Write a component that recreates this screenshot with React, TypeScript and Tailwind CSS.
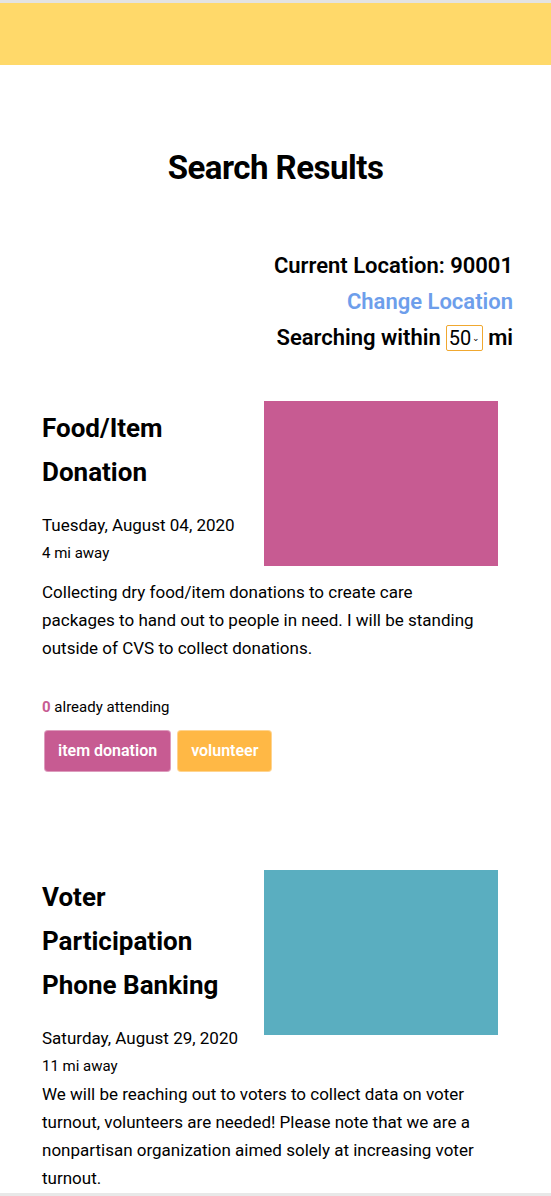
import React from "react";

const events = [
  {
    title: "Food/Item Donation",
    date: "Tuesday, August 04, 2020",
    distance: "4 mi away",
    description:
      "Collecting dry food/item donations to create care packages to hand out to people in need. I will be standing outside of CVS to collect donations.",
    color: "bg-[#c75b92]",
    attending: 0,
    tags: [
      { name: "item donation", color: "bg-[#c75b92]" },
      { name: "volunteer", color: "bg-[#ffb845]" },
    ],
  },
  {
    title: "Voter Participation Phone Banking",
    date: "Saturday, August 29, 2020",
    distance: "11 mi away",
    description:
      "We will be reaching out to voters to collect data on voter turnout, volunteers are needed! Please note that we are a nonpartisan organization aimed solely at increasing voter turnout.",
    color: "bg-[#5aaec0]",
    attending: 3,
    tags: [
      { name: "phone banking", color: "bg-[#5aaec0]" },
      { name: "volunteer", color: "bg-[#ffb845]" },
    ],
  },
];

export default function App() {
  return (
    <div className="min-h-screen bg-white text-black font-['Roboto',sans-serif]">
      <div className="h-[3px] bg-[#e3e3e3]" />
      <header className="h-[62px] bg-[#ffd96a]" />

      <h1 className="mt-[83px] text-center text-[33px] font-bold leading-[40px] tracking-[-0.5px]">
        Search Results
      </h1>

      <div className="mt-[60px] pr-[38px] flex flex-col items-end text-[22px] font-semibold leading-[36px]">
        <p>Current Location: 90001</p>
        <a href="#" className="text-[#6d9eeb]">
          Change Location
        </a>
        <p className="flex items-center gap-[5px]">
          Searching within
          <span className="flex items-center h-[26px] px-[2px] border border-[#f0a830] rounded-[2px] text-[20px] font-normal leading-none">
            50<span className="text-[9px] ml-[1px]">⌄</span>
          </span>
          mi
        </p>
      </div>

      <div className="mt-[45px] pl-[42px] pr-[50px] flex flex-col gap-[98px]">
        {events.map((ev) => (
          <div key={ev.title}>
            <div className="flex items-start justify-between">
              <div className="w-[215px]">
                <h2 className="mt-[5px] text-[26px] font-bold leading-[44px]">{ev.title}</h2>
                <p className="mt-[17px] text-[17px] leading-[28px]">{ev.date}</p>
                <p className="text-[15px] leading-[28px]">{ev.distance}</p>
              </div>
              <div className={`w-[234px] h-[165px] mr-[3px] mb-[12px] ${ev.color}`} />
            </div>
            <p className="max-w-[443px] text-[17px] leading-[28px]">{ev.description}</p>
            <p className="mt-[31px] text-[15px] leading-[28px]">
              <span className="font-bold text-[#c75b92]">{ev.attending}</span> already attending
            </p>
            <div className="mt-[9px] ml-[2px] flex gap-[6px]">
              {ev.tags.map((tag) => (
                <span
                  key={tag.name}
                  className={`h-[42px] px-[13px] flex items-center rounded-[4px] border border-white/40 text-white text-[16px] font-semibold ${tag.color}`}
                >
                  {tag.name}
                </span>
              ))}
            </div>
          </div>
        ))}
      </div>

      <div className="fixed bottom-0 left-0 right-0 h-[3px] bg-[#e8e8e8]" />
    </div>
  );
}
